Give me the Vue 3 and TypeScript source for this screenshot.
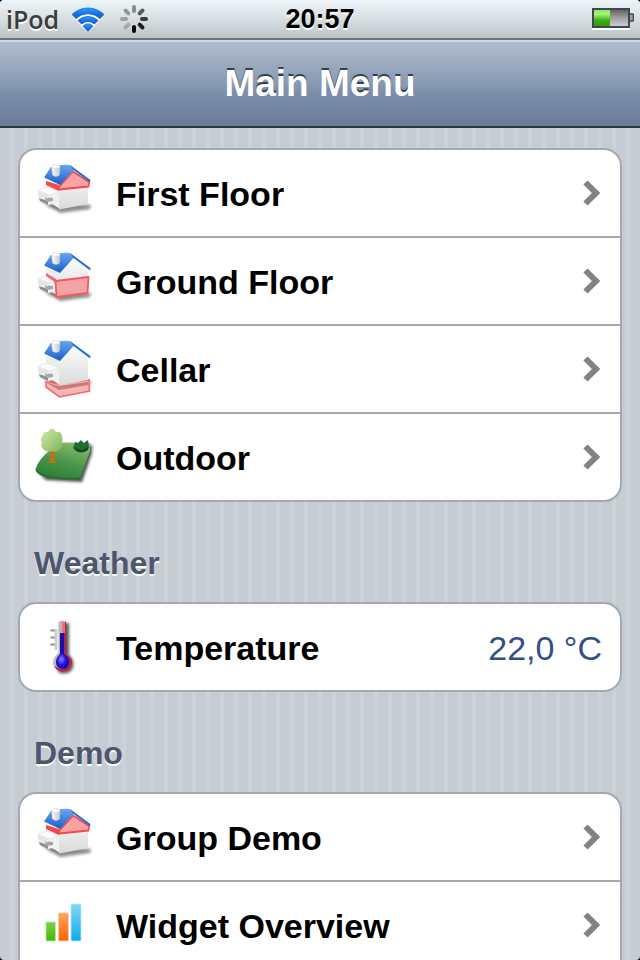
<script setup lang="ts">
type IconName = 'first' | 'ground' | 'cellar' | 'outdoor' | 'thermo' | 'chart'

interface Row {
  icon: IconName
  label: string
  value?: string
}

interface Group {
  title?: string
  continues?: boolean
  rows: Row[]
}

const groups: Group[] = [
  {
    rows: [
      { icon: 'first', label: 'First Floor' },
      { icon: 'ground', label: 'Ground Floor' },
      { icon: 'cellar', label: 'Cellar' },
      { icon: 'outdoor', label: 'Outdoor' },
    ],
  },
  { title: 'Weather', rows: [{ icon: 'thermo', label: 'Temperature', value: '22,0 °C' }] },
  {
    title: 'Demo',
    continues: true,
    rows: [
      { icon: 'first', label: 'Group Demo' },
      { icon: 'chart', label: 'Widget Overview' },
    ],
  },
]

// Clockwise from twelve o'clock
const spokes = ['#8c8c8c', '#5c5c5c', '#3c3c3c', '#202020', '#080808', '#a8a8a8', '#a0a0a0', '#969696']

const isHouse = (icon: IconName) => icon === 'first' || icon === 'ground' || icon === 'cellar'
</script>

<template>
  <div class="screen">
    <svg class="defs" width="0" height="0" aria-hidden="true">
      <defs>
        <linearGradient id="roof" x1="0" y1="0" x2="0" y2="1">
          <stop offset="0" stop-color="#69a8f3" />
          <stop offset="1" stop-color="#1b5cc8" />
        </linearGradient>
        <linearGradient id="wall" x1="0" y1="0" x2="0" y2="1">
          <stop offset="0" stop-color="#fdfdfd" />
          <stop offset="1" stop-color="#dadada" />
        </linearGradient>
        <linearGradient id="chimney" x1="0" y1="0" x2="1" y2="0">
          <stop offset="0" stop-color="#ffffff" />
          <stop offset="1" stop-color="#c4c8cf" />
        </linearGradient>
        <linearGradient id="grass" x1="0.8" y1="0" x2="0.4" y2="1">
          <stop offset="0" stop-color="#8dbb72" />
          <stop offset="0.55" stop-color="#4a964a" />
          <stop offset="1" stop-color="#2c7f37" />
        </linearGradient>
        <linearGradient id="leaves" x1="0" y1="0" x2="1" y2="1">
          <stop offset="0" stop-color="#d3eaa8" />
          <stop offset="1" stop-color="#7db45c" />
        </linearGradient>
        <radialGradient id="bulb" cx="0.4" cy="0.4" r="0.6">
          <stop offset="0" stop-color="#8a84ff" />
          <stop offset="0.6" stop-color="#2a10f0" />
          <stop offset="1" stop-color="#1400a8" />
        </radialGradient>
        <linearGradient id="barGreen" x1="0" y1="0" x2="0" y2="1">
          <stop offset="0" stop-color="#7cd04a" />
          <stop offset="1" stop-color="#45b800" />
        </linearGradient>
        <linearGradient id="barOrange" x1="0" y1="0" x2="0" y2="1">
          <stop offset="0" stop-color="#ffa55c" />
          <stop offset="1" stop-color="#ff6400" />
        </linearGradient>
        <linearGradient id="barBlue" x1="0" y1="0" x2="0" y2="1">
          <stop offset="0" stop-color="#84d8f6" />
          <stop offset="1" stop-color="#0cace6" />
        </linearGradient>
        <linearGradient id="wifi" x1="0" y1="0" x2="0" y2="1">
          <stop offset="0" stop-color="#2aa0f4" />
          <stop offset="1" stop-color="#0a52d8" />
        </linearGradient>
        <linearGradient id="charge" x1="0" y1="0" x2="0" y2="1">
          <stop offset="0" stop-color="#8ce85c" />
          <stop offset="0.25" stop-color="#a6f47c" />
          <stop offset="0.65" stop-color="#3fae14" />
          <stop offset="1" stop-color="#2e9a08" />
        </linearGradient>
        <linearGradient id="empty" x1="0" y1="0" x2="0" y2="1">
          <stop offset="0" stop-color="#5c5c5c" />
          <stop offset="0.45" stop-color="#9a9a9a" />
          <stop offset="1" stop-color="#d2d2d2" />
        </linearGradient>
        <filter id="soft" x="-30%" y="-60%" width="160%" height="220%">
          <feGaussianBlur stdDeviation="1.8" />
        </filter>
      </defs>
    </svg>

    <div class="status">
      <div class="status-left">
        <span class="carrier">iPod</span>
        <svg class="wifi" width="34" height="28" viewBox="0 0 34 28" aria-label="Wi-Fi">
          <path d="M1 10.5A23 23 0 0 1 33 10.5L17 28Z" fill="#f4f8fa" />
          <g fill="url(#wifi)" stroke="#0b4fc0" stroke-width="0.7">
            <path d="M1 9.500A23 23 0 0 1 33 9.500L29 13.500A17.500 17.500 0 0 0 5 13.500Z" />
            <path d="M7 15.500A14.500 14.500 0 0 1 27 15.500L23.500 19A9.500 9.500 0 0 0 10.500 19Z" />
            <path d="M12 21A7 7 0 0 1 22 21L17 26.500Z" />
          </g>
        </svg>
        <svg class="spinner" width="30" height="30" viewBox="-15 -15 30 30" aria-label="Loading">
          <line
            v-for="(color, i) in spokes"
            :key="i"
            x1="0"
            y1="-12"
            x2="0"
            y2="-8"
            :stroke="color"
            stroke-width="4"
            stroke-linecap="round"
            :transform="`rotate(${i * 45})`"
          />
        </svg>
      </div>
      <time class="clock">20:57</time>
      <div class="status-right">
        <svg width="42" height="24" viewBox="0 0 42 24" aria-label="Battery">
          <path d="M0 22H38" stroke="#fff" stroke-width="2" />
          <path d="M38 7h2.500q1 0 1 1v5q0 1-1 1H38" fill="#9aa0a8" stroke="#3f465a" stroke-width="1.500" />
          <rect x="1" y="2" width="36" height="18" fill="url(#empty)" stroke="#3f465a" stroke-width="2" />
          <rect x="2" y="3" width="16" height="16" fill="url(#charge)" />
        </svg>
      </div>
    </div>

    <header class="nav">
      <h1>Main Menu</h1>
    </header>

    <main class="content">
      <section v-for="(group, g) in groups" :key="g">
        <h2 v-if="group.title">{{ group.title }}</h2>
        <ul class="list" :class="{ continues: group.continues }">
          <li v-for="row in group.rows" :key="row.label">
            <component :is="row.value ? 'div' : 'a'" class="row" :href="row.value ? undefined : '#'">
              <svg class="icon" width="60" height="60" viewBox="0 0 60 60" aria-hidden="true">
                <template v-if="isHouse(row.icon)">
                  <path d="M14 42L26 50L56 46L57 42L30 40Z" fill="#000" opacity="0.45" filter="url(#soft)" />
                  <path d="M5 36L15 44L26 46L25 34Z" fill="#666" opacity="0.6" filter="url(#soft)" />
                  <template v-if="row.icon === 'cellar'">
                    <path d="M12 43L25 45L55 41L55.500 52L25.500 58L12 48Z" fill="#f6b4b4" stroke="#f26a6e" stroke-width="1.600" />
                    <path d="M13 44L25 47L54 43L54 46L25 51Z" fill="#a04a4a" opacity="0.55" />
                  </template>
                  <path d="M12 17L26 22L26 46L16 39L12 30Z" fill="#ececec" />
                  <path d="M24 22L39 6L54 18L54 41L25 46.500Z" fill="url(#wall)" />
                  <path d="M4 27L13 24L25 29L25 45L18 41L14 42L4 37Z" fill="#f1f1f1" />
                  <path d="M4 27L13 24L25 29L15 32Z" fill="#fcfcfc" stroke="#dedede" stroke-width="0.600" />
                  <path d="M5 35L14 38V42L6 38Z" fill="#8f8f8f" />
                  <path d="M10 34L19 35L19 38L13 39Z" fill="#a6a6a6" />
                  <path d="M4 28L14 32L14 35.500L4 33Z" fill="#e6e6e6" />
                  <template v-if="row.icon === 'first'">
                    <path d="M12 18L25 22L25 28L12 22Z" fill="#f4484e" />
                    <path d="M25 24L39 8.500L55 19L54.500 23.500L25 26.500Z" fill="#f9a3a5" stroke="#f4484e" stroke-width="1.800" stroke-linejoin="round" />
                  </template>
                  <template v-if="row.icon === 'ground'">
                    <path d="M12 22L22 28V32L12 25Z" fill="#ef666a" />
                    <path d="M21.500 30L54.500 26L53.500 42L22.500 46Z" fill="#f2a4a6" stroke="#f4585e" stroke-width="1.800" stroke-linejoin="round" />
                  </template>
                  <path d="M10 14.500L17 4Q27 1 36 2L40 6.500L26 22Z" fill="url(#roof)" />
                  <path d="M36 2L56.500 17L56 19.500L39 6.500Z" fill="#2c6ed4" />
                  <path d="M17.500 3.500Q22 0.500 26 3L25.500 12Q22 15 18.500 12Z" fill="url(#chimney)" stroke="#c9ccd2" stroke-width="0.500" />
                  <ellipse cx="21.800" cy="3.500" rx="4" ry="1.800" fill="#fff" stroke="#c9ccd2" stroke-width="0.500" />
                </template>

                <template v-else-if="row.icon === 'outdoor'">
                  <path d="M28 18L58 18L58 26L48 55L12 53L5 46Z" fill="#000" opacity="0.7" filter="url(#soft)" />
                  <path d="M26 15.500L56 16L56 24L46 52Q24 54 9 49Q1 45 2 41Q5 32 15 24Z" fill="url(#grass)" />
                  <path d="M2 42Q3 47 12 49Q28 53 46 51" fill="none" stroke="#2a6b2f" stroke-width="1.500" />
                  <path d="M39 21L41 15L44 16L47 13L50 16L54 13L55 20Q47 29 39 21Z" fill="#1f6e2e" />
                  <path d="M41 20Q48 26 55 19L54 23Q47 28 41 23Z" fill="#0f4d1e" />
                  <path d="M16 22H20.500L21 34L24 36H14L16 33Z" fill="#b87423" />
                  <path d="M18 1.500Q21 2 22 5Q27 4 28 9Q29 13 28 16Q29 21 25 23Q21 26 18 24Q12 26 9 22Q6 19 8 16Q5 12 9 8Q10 4 14 5Q15 2 18 1.500Z" fill="url(#leaves)" />
                </template>

                <template v-else-if="row.icon === 'thermo'">
                  <path d="M30 6H35V38Q42 44 38 53Q32 59 24 55Z" fill="#000" opacity="0.65" filter="url(#soft)" />
                  <path d="M16.500 13.500H22M16.500 20.500H22M16.500 27.500H22" stroke="#8d8d8d" stroke-width="2" />
                  <path d="M22 12V33" stroke="#cfcfcf" stroke-width="3" />
                  <path d="M24.500 5Q28 2 32 5V37Q39 41 38 47Q36 55 28.500 55Q20 54 19 46Q19 40 24.500 36Z" fill="#b9b9b9" />
                  <path d="M28 5H32V37Q39 41 38 47Q36 55 28.500 55Q22 54 20.500 49Q31 56 34 46Q34 41 28 37Z" fill="#a82a46" />
                  <path d="M28 5H31V16H28Z" fill="#f06a80" />
                  <path d="M26 16H30V37Q36 41 35 46Q34 52 28.500 52Q22 51 22 45Q22 41 26 37Z" fill="#1a0cae" />
                  <path d="M28 36Q34 42 34.500 46Q33 51.500 28.500 51.500Q23 51 22.500 45Q23 42 28 36Z" fill="url(#bulb)" />
                </template>

                <template v-else>
                  <rect x="12" y="27" width="9.500" height="19" rx="1" fill="url(#barGreen)" stroke="#b9e69b" stroke-width="0.800" />
                  <rect x="24.500" y="18" width="10" height="28" rx="1" fill="url(#barOrange)" stroke="#ffd0a8" stroke-width="0.800" />
                  <rect x="37" y="9" width="10" height="37" rx="1" fill="url(#barBlue)" stroke="#b6e8fa" stroke-width="0.800" />
                </template>
              </svg>
              <span class="label">{{ row.label }}</span>
              <span v-if="row.value" class="value">{{ row.value }}</span>
              <svg v-else class="chevron" width="20" height="26" viewBox="0 0 20 26" aria-hidden="true">
                <path d="M3.500 2.500L14 13L3.500 23.500" fill="none" stroke="#828282" stroke-width="6" />
              </svg>
            </component>
          </li>
        </ul>
      </section>
    </main>
  </div>
</template>

<style>
body {
  margin: 0;
  background: #000;
}
</style>

<style scoped>
.screen {
  display: flex;
  flex-direction: column;
  height: 100vh;
  overflow: hidden;
  border-radius: 4px;
  font-family: "Liberation Sans", Arial, Helvetica, sans-serif;
  background: repeating-linear-gradient(to right, #c5ccd3 0 10px, #cbd2d8 10px 14px);
}

.defs {
  display: block;
  flex: none;
}

.status {
  display: grid;
  flex: none;
  grid-template-columns: 1fr auto 1fr;
  align-items: center;
  box-sizing: border-box;
  height: 40px;
  padding: 0 6px;
  border-bottom: 2px solid #68737a;
  background: linear-gradient(#eef5f8, #d7dfe2 50%, #bcc3c6);
}

.status-left {
  display: flex;
  align-items: center;
}

.carrier {
  font-family: "Open Sans", "Noto Sans", sans-serif;
  font-size: 25px;
  font-weight: 600;
  line-height: 36px;
  color: #3c3c3c;
  text-shadow: 0 2px 0 #fff;
}

.wifi {
  margin-left: 12px;
}

.spinner {
  margin-left: 14px;
}

.clock {
  font-size: 27px;
  font-weight: 700;
  line-height: 38px;
  color: #000;
  text-shadow: 0 2px 0 #fff;
}

.status-right {
  display: flex;
  justify-content: flex-end;
}

.nav {
  display: flex;
  flex: none;
  align-items: center;
  justify-content: center;
  box-sizing: border-box;
  height: 88px;
  border-top: 2px solid #cdd7e2;
  border-bottom: 2px solid #2d3642;
  background: linear-gradient(#b1bdcd, #8799b2 50%, #7c8eab 60%, #6b7c98);
}

h1 {
  margin: 0;
  font-size: 37px;
  font-weight: 700;
  line-height: 44px;
  color: #fff;
  text-shadow: 0 -2px 0 #343e4c;
}

.content {
  flex: 1;
  min-height: 0;
  padding: 20px 18px;
  overflow-y: auto;
  scrollbar-width: none;
}

h2 {
  box-sizing: border-box;
  height: 100px;
  margin: 0;
  padding: 43px 16px 0;
  font-size: 32px;
  font-weight: 700;
  line-height: 36px;
  color: #4c566c;
  text-shadow: 0 2px 0 #fff;
}

.list {
  margin: 0;
  padding: 0;
  border: 2px solid #a5a9ac;
  border-radius: 18px;
  list-style: none;
  background: #fff;
}

.list.continues {
  border-bottom: 0;
  border-radius: 18px 18px 0 0;
}

li + li {
  border-top: 2px solid #a5a9ac;
}

.row {
  display: flex;
  align-items: center;
  gap: 22px;
  height: 86px;
  padding: 0 18px 0 14px;
  color: #000;
  text-decoration: none;
}

.icon,
.chevron {
  flex: none;
}

.label {
  flex: 1;
  padding-top: 2px;
  font-size: 34px;
  font-weight: 700;
  line-height: 40px;
}

.value {
  padding-top: 2px;
  font-size: 34px;
  line-height: 40px;
  color: #324f85;
}
</style>
